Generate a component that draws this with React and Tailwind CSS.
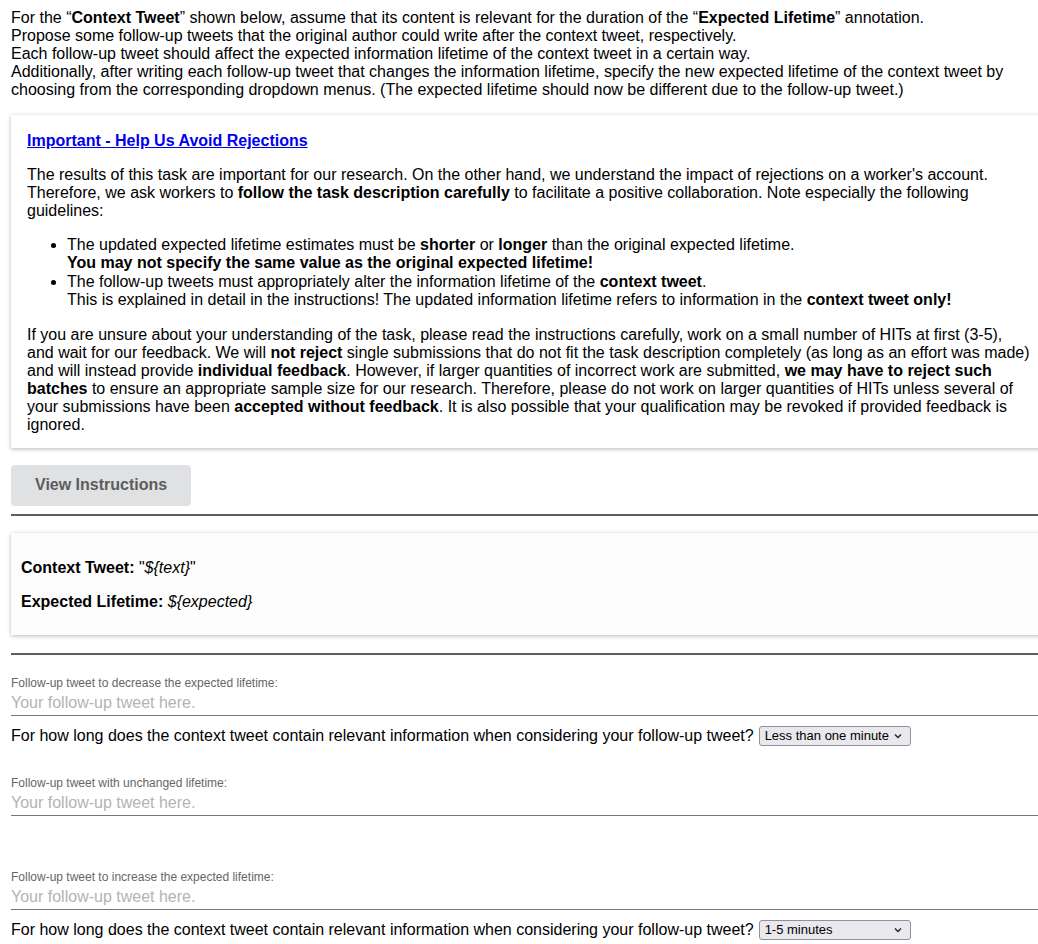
import React from 'react'

const font = { fontFamily: '"Liberation Sans", Arial, sans-serif' }

const Chevron = () => (
  <svg width="10" height="10" viewBox="0 0 10 10" className="shrink-0">
    <path d="M2 3.5 L5 6.5 L8 3.5" fill="none" stroke="#222" strokeWidth="1.4" />
  </svg>
)

const FakeSelect = ({ value }) => (
  <div className="inline-flex items-center justify-between w-[152px] h-[20px] pl-[5px] pr-[7px] bg-[#e9e9ed] border border-[#8f8f9d] rounded-[3px] text-[13px] leading-[15px] text-black align-middle">
    <span>{value}</span>
    <Chevron />
  </div>
)

const FollowUp = ({ label, value, className }) => (
  <div className={className}>
    <div className="text-[12px] leading-[14px] text-[#666]">{label}</div>
    <div className="h-[26px] border-b border-[#777] flex items-center text-[16px] text-[#b3b3b3] pt-[2px]">
      Your follow-up tweet here.
    </div>
    {value && (
      <div className="flex items-center gap-[5px] mt-[10px] h-[20px]">
        <span className="text-[16px]">
          For how long does the context tweet contain relevant information when considering your follow-up tweet?
        </span>
        <FakeSelect value={value} />
      </div>
    )}
  </div>
)

export default function App() {
  return (
    <div className="w-[1038px] min-h-[944px] overflow-hidden bg-white text-black" style={font}>
      <div className="ml-[11px] w-[1038px] pt-[9px] text-[16px] leading-[18px]">
        <p>
          For the “<b>Context Tweet</b>” shown below, assume that its content is relevant for the duration of the “<b>Expected Lifetime</b>” annotation.
          <br />
          Propose some follow-up tweets that the original author could write after the context tweet, respectively.
          <br />
          Each follow-up tweet should affect the expected information lifetime of the context tweet in a certain way.
          <br />
          Additionally, after writing each follow-up tweet that changes the information lifetime, specify the new expected lifetime of the context tweet by choosing from the corresponding dropdown menus. (The expected lifetime should now be different due to the follow-up tweet.)
        </p>

        <div className="mt-4 bg-white px-4 pt-[17px] pb-[14px] shadow-[0_1px_4px_rgba(0,0,0,0.28)]">
          <a href="#" className="font-bold text-[#0000ee] underline">
            Important - Help Us Avoid Rejections
          </a>
          <p className="mt-4">
            The results of this task are important for our research. On the other hand, we understand the impact of rejections on a worker's account. Therefore, we ask workers to <b>follow the task description carefully</b> to facilitate a positive collaboration. Note especially the following guidelines:
          </p>
          <ul className="list-disc pl-10 my-4 leading-[18.4px]">
            <li>
              The updated expected lifetime estimates must be <b>shorter</b> or <b>longer</b> than the original expected lifetime.
              <br />
              <b>You may not specify the same value as the original expected lifetime!</b>
            </li>
            <li>
              The follow-up tweets must appropriately alter the information lifetime of the <b>context tweet</b>.
              <br />
              This is explained in detail in the instructions! The updated information lifetime refers to information in the <b>context tweet only!</b>
            </li>
          </ul>
          <p>
            If you are unsure about your understanding of the task, please read the instructions carefully, work on a small number of HITs at first (3-5), and wait for our feedback. We will <b>not reject</b> single submissions that do not fit the task description completely (as long as an effort was made) and will instead provide <b>individual feedback</b>. However, if larger quantities of incorrect work are submitted, <b>we may have to reject such batches</b> to ensure an appropriate sample size for our research. Therefore, please do not work on larger quantities of HITs unless several of your submissions have been <b>accepted without feedback</b>. It is also possible that your qualification may be revoked if provided feedback is ignored.
          </p>
        </div>

        <button className="mt-[17px] h-[41px] px-6 rounded-[4px] bg-[#e0e1e2] text-[#5c5c5c] font-bold text-[16px]" style={font}>
          View Instructions
        </button>

        <div className="mt-[8px] h-[2px] bg-[#5e5e5e]" />

        <div className="mt-[17px] bg-[#fdfdfd] px-[10px] pt-[10px] pb-[8px] shadow-[0_1px_4px_rgba(0,0,0,0.28)]">
          <p className="my-4">
            <b>Context Tweet:</b> "<i>${'{text}'}</i>"
          </p>
          <p className="my-4">
            <b>Expected Lifetime:</b> <i>${'{expected}'}</i>
          </p>
        </div>

        <div className="mt-[18px] h-[2px] bg-[#5e5e5e]" />

        <FollowUp className="mt-[21px]" label="Follow-up tweet to decrease the expected lifetime:" value="Less than one minute" />
        <FollowUp className="mt-[30px]" label="Follow-up tweet with unchanged lifetime:" />
        <FollowUp className="mt-[54px]" label="Follow-up tweet to increase the expected lifetime:" value="1-5 minutes" />
      </div>
    </div>
  )
}
